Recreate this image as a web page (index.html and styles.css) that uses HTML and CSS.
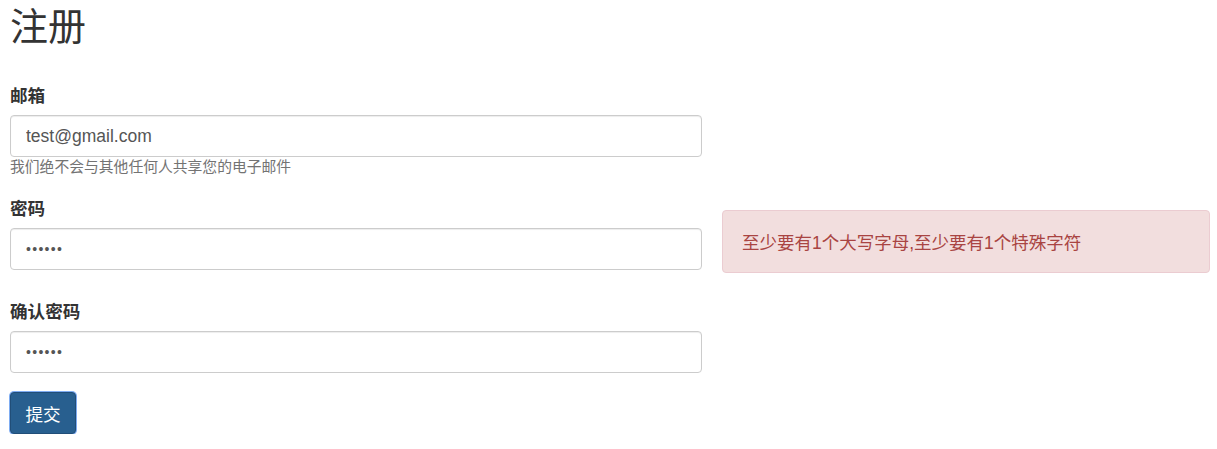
FILE: index.html
```html
<!DOCTYPE html>
<html lang="zh">
<head>
<meta charset="utf-8">
<title>注册</title>
<link rel="stylesheet" href="styles.css">
</head>
<body>
<h1 class="title">注册</h1>
<form class="form">
  <div class="group group-email">
    <label class="label">邮箱</label>
    <div class="row">
      <div class="field">
        <input class="input" type="text" value="test@gmail.com">
      </div>
    </div>
    <div class="help">我们绝不会与其他任何人共享您的电子邮件</div>
  </div>
  <div class="row row-pass">
    <div class="field">
      <label class="label">密码</label>
      <input class="input" type="password" value="123456">
    </div>
    <div class="alert">至少要有1个大写字母,至少要有1个特殊字符</div>
  </div>
  <div class="group group-confirm">
    <div class="row">
      <div class="field">
        <label class="label">确认密码</label>
        <input class="input" type="password" value="123456">
      </div>
    </div>
  </div>
  <button class="btn" type="button">提交</button>
</form>
</body>
</html>
```
FILE: styles.css
```css
* { box-sizing: border-box; }
html, body { margin: 0; background: #fff; }
body {
  padding: 0 8px 0 10px;
  font-family: "Liberation Sans", "Noto Sans CJK SC", sans-serif;
  color: #333;
  font-size: 17.6px;
}
.title {
  margin: 7px 0 0;
  font-size: 38px;
  line-height: 40px;
  font-weight: 400;
}
.form { display: flex; flex-direction: column; align-items: flex-start; width: 100%; }
.group { width: 100%; }
.group-email { margin-top: 38px; }
.row { display: flex; width: 100%; gap: 20px; align-items: flex-start; }
.field { width: 692px; flex: none; }
.label {
  display: block;
  font-size: 17.6px;
  line-height: 22px;
  font-weight: 700;
  margin-bottom: 8px;
}
.input {
  display: block;
  width: 100%;
  height: 42px;
  padding: 0 15px;
  border: 1px solid #ccc;
  border-radius: 4px;
  font-family: "Liberation Sans", "Noto Sans CJK SC", sans-serif;
  font-size: 17.5px;
  color: #555;
  box-shadow: inset 0 1px 1px rgba(0,0,0,0.075);
  outline: none;
}
.input[type="password"] { font-size: 14px; letter-spacing: 1.3px; }
.help {
  font-size: 14.8px;
  line-height: 18px;
  color: #737373;
  margin-top: 1px;
}
.row-pass { margin-top: 22px; }
.alert {
  flex: 1;
  margin-top: 12px;
  margin-right: -1px;
  height: 63px;
  padding: 0 19px;
  display: flex;
  align-items: center;
  background: #f2dede;
  border: 1px solid #ebccd1;
  border-radius: 4px;
  color: #a94442;
  font-size: 17.5px;
}
.group-confirm { margin-top: 28px; }
.btn {
  margin-top: 19px;
  width: 66px;
  height: 42px;
  padding: 0;
  background: #285f8f;
  color: #fff;
  border: 1px solid #214e78;
  border-radius: 4px;
  box-shadow: 0 0 0 1px #7eacf2;
  font-family: "Liberation Sans", "Noto Sans CJK SC", sans-serif;
  font-size: 17.6px;
  cursor: pointer;
}
```
